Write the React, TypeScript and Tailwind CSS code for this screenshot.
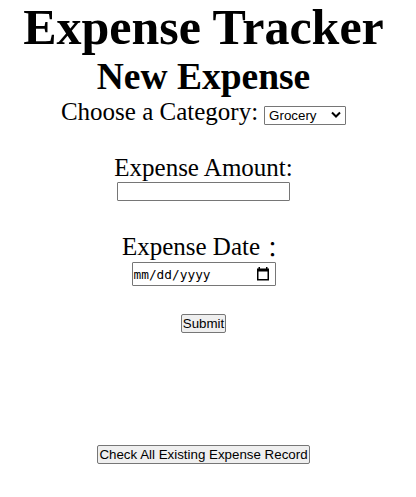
import React from "react";

const field = "rounded-[1px] border border-[#767676] bg-white";
const button =
  "h-[19px] rounded-[2px] border border-[#767676] bg-[#efefef] font-['Liberation_Sans',Arial,sans-serif] text-[13.333px] leading-[17px] whitespace-nowrap";

export default function App() {
  return (
    <main className="flex h-[497px] w-[407px] flex-col items-center bg-white font-['Liberation_Serif','Noto_Sans_CJK_SC',serif] text-[25px] leading-[29px] text-black">
      <h1 className="h-[55px] text-[50px] leading-[55px] font-bold whitespace-nowrap">Expense Tracker</h1>
      <h2 className="h-[42px] text-[37.5px] leading-[43px] font-bold whitespace-nowrap">New Expense</h2>
      <div className="flex h-[29px] items-center gap-[6px] whitespace-nowrap">
        <label>Choose a Category:</label>
        <div className={`${field} mt-[7px] flex h-[19px] w-[82px] items-center justify-between pr-[4px] pl-1 font-['Liberation_Sans',Arial,sans-serif] text-[13.333px] leading-[17px]`}>
          <span>Grocery</span>
          <svg width="10" height="8" viewBox="0 0 10 8" fill="none" stroke="#000" strokeWidth="2"><path d="M1 1.5l4 4 4-4" /></svg>
        </div>
      </div>
      <label className="mt-[27px] h-[29px] whitespace-nowrap">Expense Amount:</label>
      <input aria-label="Expense Amount" className={`${field} h-[19px] w-[173px]`} />
      <label className="mt-[31px] flex h-[30px] whitespace-nowrap">
        Expense Date
        <span className="w-[25px] pt-px text-center font-['Noto_Sans_CJK_TC',sans-serif] text-[22px]">：</span>
      </label>
      <div className={`${field} flex h-[24px] w-[144px] items-center justify-between pr-[5px] pl-px font-['DejaVu_Sans_Mono',monospace] text-[12.8px]`}>
        <span>mm/dd/yyyy</span>
        <svg width="14" height="14" viewBox="0 0 14 14" fill="#000"><path fillRule="evenodd" d="M2.5 0H4v1.5h6V0h1.5v1.5H13V13.5H1V1.5h1.5zM2.5 4.5V12h9V4.5z" /></svg>
      </div>
      <button className={`${button} mt-[28px] w-[45px]`}>Submit</button>
      <button className={`${button} mt-[112px] w-[213px]`}>Check All Existing Expense Record</button>
    </main>
  );
}
